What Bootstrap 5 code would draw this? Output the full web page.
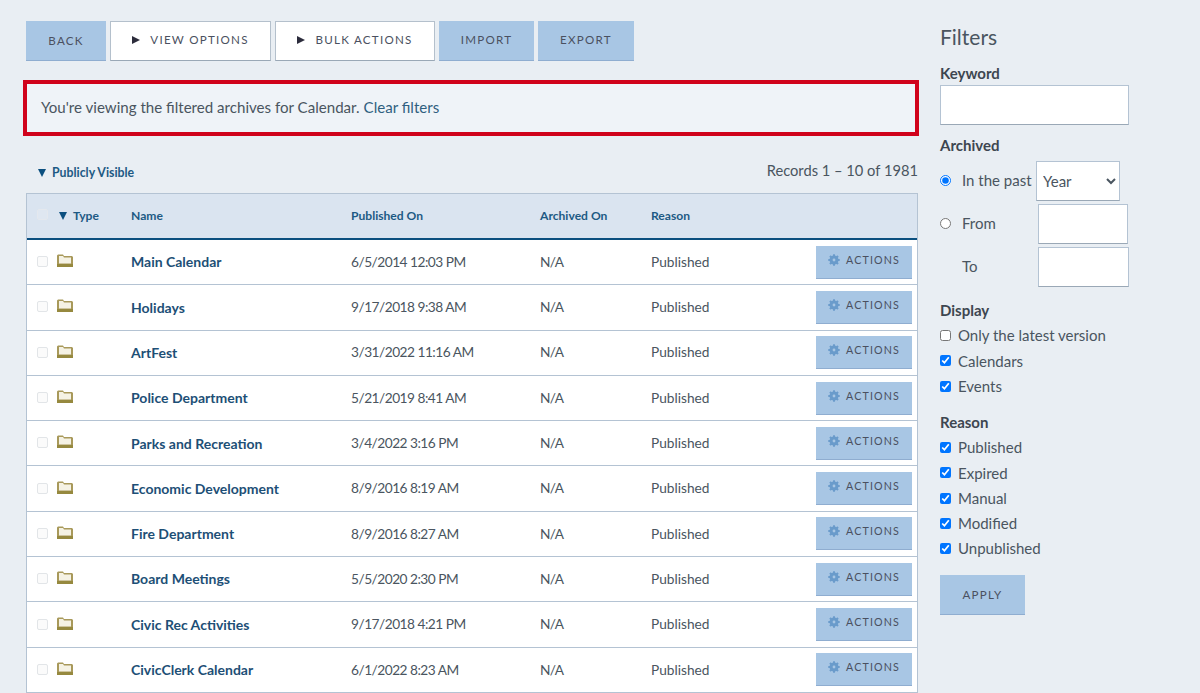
<!DOCTYPE html>
<html lang="en">
<head>
<meta charset="utf-8">
<title>Archives</title>
<link href="https://cdn.jsdelivr.net/npm/bootstrap@5.3.0/dist/css/bootstrap.min.css" rel="stylesheet">
<style>
html,body{height:693px;overflow:hidden}
body{background:#e9eef3;font-family:"Lato","Liberation Sans",sans-serif;font-size:15px;color:#4a5560}
.page-wrap{padding:21px 0 0 26px;gap:22px}
.main-col{width:892px;flex:none}
.side-col{width:190px;flex:none}
.tool-row{gap:4px;height:40px}
.act-btn{font-family:"Lato","Liberation Sans",sans-serif;font-size:11.6px;letter-spacing:1.25px;text-transform:uppercase;color:#4a5060;background:#a8c6e4;border:0;border-bottom:1px solid #8fadd0;border-radius:0;padding:0;height:40px;display:flex;align-items:center;justify-content:center}
.act-btn:hover{background:#a8c6e4}
.act-back{width:80px}.act-imp{width:95px;padding-bottom:2px}.act-exp{width:96px;padding-bottom:2px}
.act-white{background:#fff;border:1px solid #b4c0cc;border-bottom-color:#9aa8b6;gap:10px;padding-bottom:3px}
.act-white:hover{background:#fff}
.act-view{width:161px}.act-bulk{width:160px}
.tri-r{width:0;height:0;border-left:8px solid #2c2c3c;border-top:4px solid transparent;border-bottom:4px solid transparent}
.tri-d{display:inline-block;width:0;height:0;border-top:8px solid #0b4f7f;border-left:4.5px solid transparent;border-right:4.5px solid transparent}
.notice{margin:19px 0 0 -3px;width:896px;height:56px;border:4px solid #d0021b;background:#eff3f8;padding:0 0 1px 14px;display:flex;align-items:center;font-size:15.1px;color:#4a5560}
.notice a{color:#2f5f80;text-decoration:none;margin-left:4px}
.meta-row{height:57px;padding:14px 0 0 12px}
.vis-link{font-weight:700;font-size:12.3px;color:#1d5a84;text-decoration:none;display:flex;align-items:center;gap:6px;margin-top:3px}
.rec-count{font-size:14.7px;margin-bottom:2px}
.rec-table{width:892px;table-layout:fixed;border-collapse:separate;border-spacing:0;background:#fff;border:1px solid #b4c3d3;margin:0}
.rec-table th{background:#dae4f0;height:46px;border-bottom:2px solid #0b4f7f;font-size:12.1px;font-weight:700;color:#1d5a84;padding:0;vertical-align:middle}
.rec-table td{height:45.3px;border-bottom:1px solid #b4c3d3;padding:0;vertical-align:middle;font-size:13.7px;color:#4a5560;background:#fff}
.c-chk{width:30px;padding-left:10px!important}
.c-type{width:74px}.c-name{width:220px}.c-pub{width:189px}.c-arc{width:111px}
.c-res{width:auto}.c-act{width:101px}
.pale-box{appearance:none;display:block;width:11px;height:11px;border:1px solid #e2e5e8;border-radius:2px;background:#fbfbfb;margin:-1px 0 0 0}
.rec-table th .pale-box{background:#dfe7f1;border-color:#e4e8ee;margin-top:-3px}
.rec-name{font-weight:700;color:#1d4f76;text-decoration:none;font-size:14px}
.date-txt{letter-spacing:-.5px}
.na-txt{letter-spacing:-.6px}
.row-btn{width:96px;height:33px;gap:6px;font-size:10.7px;letter-spacing:1.15px;padding-bottom:4px}
.type-head{display:flex;align-items:center;gap:6px;padding-left:2px}
.folder{display:block;margin:-3px 0 0 0}
.side-col h2{font-size:21px;font-weight:400;color:#4a5560;margin:4px 0 15px;line-height:24px}
.side-label{font-weight:700;font-size:15px;color:#3d4650;line-height:18px;margin:0;display:block}
.field-box{background:#fff;border:1px solid #b4c3d3;border-bottom-color:#9aa8b6;border-radius:0;height:40px;display:block;padding:0 6px}
.kw{width:189px;margin-top:3px}
.arch-head{margin-top:11px}
.arch-grid{display:grid;grid-template-columns:96px 92px;margin-top:7px;row-gap:3px;align-items:center;font-size:15px}
.arch-grid label{display:flex;align-items:center;gap:11px;padding-bottom:2px}
.arch-grid input[type=radio]{margin:0;width:11px;height:11px}
.sel-box{width:84px;background:#fff;color:#4a5560;font:inherit;padding:0 2px}
.date-box{width:90px;margin-left:2px}
.date-wide{width:91px}
.to-lab{padding:0 0 2px 22px}
.chk-list label{display:flex;align-items:center;gap:7px;height:25.3px;font-size:15px}
.chk-list input{margin:0;width:11px;height:11px}
.grp-gap{margin-top:14px}
.grp-head{margin-bottom:4px}
.apply{width:85px;margin-top:14px}
</style>
</head>
<body>
<div class="d-flex page-wrap">
  <div class="main-col">
    <div class="d-flex tool-row">
      <button class="btn act-btn act-back" type="button">Back</button>
      <button class="btn act-btn act-white act-view" type="button"><span class="tri-r"></span>View Options</button>
      <button class="btn act-btn act-white act-bulk" type="button"><span class="tri-r"></span>Bulk Actions</button>
      <button class="btn act-btn act-imp" type="button">Import</button>
      <button class="btn act-btn act-exp" type="button">Export</button>
    </div>
    <div class="notice">You're viewing the filtered archives for Calendar.<a href="#">Clear filters</a></div>
    <div class="d-flex justify-content-between align-items-center meta-row">
      <a class="vis-link" href="#"><span class="tri-d"></span>Publicly Visible</a>
      <div class="rec-count">Records 1 – 10 of 1981</div>
    </div>
    <table class="rec-table" id="recs">
      <thead><tr>
        <th class="c-chk"><input class="pale-box" type="checkbox" aria-label="Select all"></th>
        <th class="c-type"><span class="type-head"><span class="tri-d"></span>Type</span></th>
        <th class="c-name">Name</th>
        <th class="c-pub">Published On</th>
        <th class="c-arc">Archived On</th>
        <th class="c-res">Reason</th>
        <th class="c-act"></th>
      </tr></thead>
      <tbody id="rows"></tbody>
    </table>
  </div>
  <aside class="side-col">
    <h2>Filters</h2>
    <label class="side-label" for="kw">Keyword</label>
    <input id="kw" class="field-box kw" type="text">
    <div class="side-label arch-head">Archived</div>
    <div class="arch-grid">
      <label><input type="radio" name="a" checked>In the past</label>
      <select class="field-box sel-box" aria-label="Period"><option>Year</option></select>
      <label><input type="radio" name="a">From</label>
      <input class="field-box date-box" type="text" aria-label="From">
      <div class="to-lab">To</div>
      <input class="field-box date-box date-wide" type="text" aria-label="To">
    </div>
    <div class="side-label grp-gap grp-head">Display</div>
    <div class="chk-list">
      <label><input type="checkbox">Only the latest version</label>
      <label><input type="checkbox" checked>Calendars</label>
      <label><input type="checkbox" checked>Events</label>
    </div>
    <div class="side-label grp-gap grp-head">Reason</div>
    <div class="chk-list">
      <label><input type="checkbox" checked>Published</label>
      <label><input type="checkbox" checked>Expired</label>
      <label><input type="checkbox" checked>Manual</label>
      <label><input type="checkbox" checked>Modified</label>
      <label><input type="checkbox" checked>Unpublished</label>
    </div>
    <button class="btn act-btn apply" type="button">Apply</button>
  </aside>
</div>
<script>
var d=[["Main Calendar","6/5/2014 12:03 PM"],["Holidays","9/17/2018 9:38 AM"],["ArtFest","3/31/2022 11:16 AM"],["Police Department","5/21/2019 8:41 AM"],["Parks and Recreation","3/4/2022 3:16 PM"],["Economic Development","8/9/2016 8:19 AM"],["Fire Department","8/9/2016 8:27 AM"],["Board Meetings","5/5/2020 2:30 PM"],["Civic Rec Activities","9/17/2018 4:21 PM"],["CivicClerk Calendar","6/1/2022 8:23 AM"]];
var folder='<svg class="folder" width="16" height="13" viewBox="0 0 16 13"><path d="M0 1.500 1 .5h5l1 1.500h8l1 1v10H0z" fill="#a8995a"/><path d="M2 2h4l1 1.500h7V9.500H2z" fill="#f5f2e4"/><rect x="0" y="10" width="16" height="3" fill="#96893f"/></svg>';
var gear='<svg width="12" height="12" viewBox="0 0 12 12"><g fill="#6a9bcb"><circle cx="6" cy="6" r="4.500"/><rect x="5" y=".3" width="2" height="11.400"/><rect x=".3" y="5" width="11.400" height="2"/><rect x="5" y=".3" width="2" height="11.400" transform="rotate(45 6 6)"/><rect x="5" y=".3" width="2" height="11.400" transform="rotate(-45 6 6)"/></g><circle cx="6" cy="6" r="1.400" fill="#a8c6e4"/></svg>';
document.getElementById('rows').innerHTML=d.map(function(r){return '<tr><td class="c-chk"><input class="pale-box" type="checkbox" aria-label="Select"></td><td>'+folder+'</td><td><a class="rec-name" href="#">'+r[0]+'</a></td><td><span class="date-txt">'+r[1]+'</span></td><td><span class="na-txt">N/A</span></td><td>Published</td><td><button class="btn act-btn row-btn" type="button">'+gear+'Actions</button></td></tr>'}).join('');
</script>
<script src="https://cdn.jsdelivr.net/npm/bootstrap@5.3.0/dist/js/bootstrap.bundle.min.js"></script>
</body>
</html>
